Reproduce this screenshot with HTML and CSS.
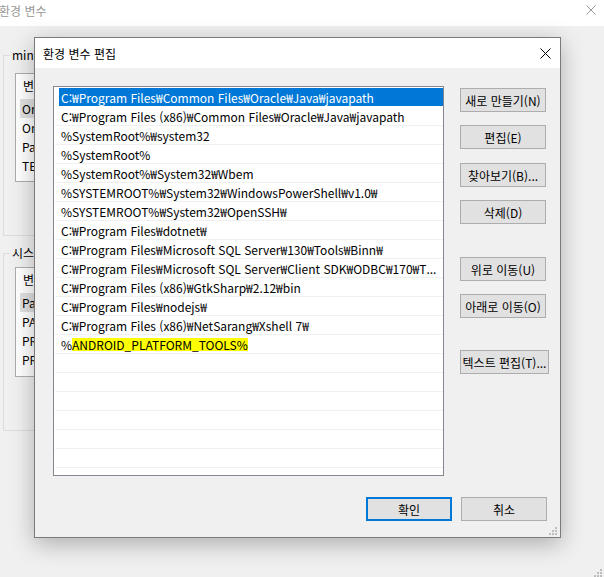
FILE: index.html
```html
<!DOCTYPE html>
<html lang="ko">
<head>
<meta charset="utf-8">
<title>환경 변수 편집</title>
<link rel="stylesheet" href="styles.css">
</head>
<body>
<div class="bgwin">
  <div class="bg-title">
    <span class="bg-title-text">환경 변수</span>
    <svg class="bg-close" width="10" height="10" viewBox="0 0 10 10"><path d="M0.5 0.5L9.5 9.5M9.5 0.5L0.5 9.5" stroke="#9a9a9a" stroke-width="1" fill="none"/></svg>
  </div>
  <div class="bg-body">
    <div class="group g1">
      <div class="legend">mint</div>
      <div class="lv lv1">
        <div class="lv-head">변</div>
        <div class="lv-row sel">Or</div>
        <div class="lv-row">Or</div>
        <div class="lv-row">Pa</div>
        <div class="lv-row">TE</div>
      </div>
    </div>
    <div class="group g2">
      <div class="legend">시스</div>
      <div class="lv lv2">
        <div class="lv-head">변</div>
        <div class="lv-row sel">Pa</div>
        <div class="lv-row">PA</div>
        <div class="lv-row">PR</div>
        <div class="lv-row">PR</div>
      </div>
    </div>
  </div>
  <svg class="grip bg-grip" width="10" height="10" viewBox="0 0 10 10"><rect x="8" y="2" width="2" height="2"/><rect x="5" y="5" width="2" height="2"/><rect x="8" y="5" width="2" height="2"/><rect x="2" y="8" width="2" height="2"/><rect x="5" y="8" width="2" height="2"/><rect x="8" y="8" width="2" height="2"/></svg>
</div>

<div class="dialog">
  <div class="dlg-title">
    <span>환경 변수 편집</span>
    <svg class="dlg-close" width="11" height="11" viewBox="0 0 11 11"><path d="M0.5 0.5L10.5 10.5M10.5 0.5L0.5 10.5" stroke="#000" stroke-width="1" fill="none"/></svg>
  </div>
  <div class="dlg-body">
    <div class="dlg-main">
      <div class="list">
        <div class="row sel">C:₩Program Files₩Common Files₩Oracle₩Java₩javapath</div>
        <div class="row">C:₩Program Files (x86)₩Common Files₩Oracle₩Java₩javapath</div>
        <div class="row">%SystemRoot%₩system32</div>
        <div class="row">%SystemRoot%</div>
        <div class="row">%SystemRoot%₩System32₩Wbem</div>
        <div class="row">%SYSTEMROOT%₩System32₩WindowsPowerShell₩v1.0₩</div>
        <div class="row">%SYSTEMROOT%₩System32₩OpenSSH₩</div>
        <div class="row">C:₩Program Files₩dotnet₩</div>
        <div class="row">C:₩Program Files₩Microsoft SQL Server₩130₩Tools₩Binn₩</div>
        <div class="row">C:₩Program Files₩Microsoft SQL Server₩Client SDK₩ODBC₩170₩T...</div>
        <div class="row">C:₩Program Files (x86)₩GtkSharp₩2.12₩bin</div>
        <div class="row">C:₩Program Files₩nodejs₩</div>
        <div class="row">C:₩Program Files (x86)₩NetSarang₩Xshell 7₩</div>
        <div class="row">%<span class="hl">ANDROID_PLATFORM_TOOLS%</span></div>
        <div class="row"></div>
        <div class="row"></div>
        <div class="row"></div>
        <div class="row"></div>
        <div class="row"></div>
        <div class="row"></div>
        <div class="row"></div>
      </div>
      <div class="side">
        <button class="btn">새로 만들기(N)</button>
        <button class="btn">편집(E)</button>
        <button class="btn gap14">찾아보기(B)...</button>
        <button class="btn">삭제(D)</button>
        <button class="btn gap33">위로 이동(U)</button>
        <button class="btn">아래로 이동(O)</button>
        <button class="btn gap32 wide">텍스트 편집(T)...</button>
      </div>
    </div>
    <div class="dlg-foot">
      <button class="btn ok">확인</button>
      <button class="btn">취소</button>
    </div>
  </div>
  <svg class="grip dlg-grip" width="10" height="10" viewBox="0 0 10 10"><rect x="8" y="2" width="2" height="2"/><rect x="5" y="5" width="2" height="2"/><rect x="8" y="5" width="2" height="2"/><rect x="2" y="8" width="2" height="2"/><rect x="5" y="8" width="2" height="2"/><rect x="8" y="8" width="2" height="2"/></svg>
</div>
</body>
</html>
```
FILE: styles.css
```css
* { box-sizing: border-box; margin: 0; padding: 0; }
html, body { width: 604px; height: 577px; overflow: hidden; }
body {
  background: #f0f0f0;
  font-family: "Noto Sans CJK KR", "Noto Sans", sans-serif;
  font-size: 12px;
  color: #000;
  position: relative;
}

/* background window */
.bgwin { height: 577px; position: relative; }
.bg-title {
  height: 26px;
  background: #fff;
  display: flex;
  justify-content: space-between;
  align-items: flex-start;
  padding: 2px 8px 0 0;
}
.bg-title-text { color: #999; line-height: 18px; margin-left: -1px; }
.bg-close { margin-top: 3px; }
.bg-body { padding: 29px 0 0 3px; width: 34px; overflow: hidden; }
.group {
  width: 560px;
  border: 1px solid #dcdcdc;
  border-right: none;
}
.g1 { height: 181px; }
.g2 { height: 178px; margin-top: 17px; }
.legend {
  width: fit-content;
  background: #f0f0f0;
  margin: -9px 0 0 6px;
  padding: 0 2px;
  line-height: 16px;
  height: 16px;
  color: #000;
  white-space: nowrap;
}
.lv {
  margin-left: 11px;
  width: 520px;
  background: #fff;
  border: 1px solid #adadad;
  overflow: hidden;
}
.lv1 { margin-top: 10px; height: 109px; }
.lv2 { margin-top: 6px; height: 110px; }
.lv-head { height: 25px; line-height: 24px; padding-left: 7px; }
.lv-row { height: 19px; line-height: 19px; margin-left: 4px; padding-left: 2px; }
.lv-row.sel { background: #e0e0e0; }

.grip { position: absolute; fill: #bcbcbc; }
.bg-grip { right: 2px; bottom: 0; }

/* dialog */
.dialog {
  position: absolute;
  left: 34px;
  top: 37px;
  width: 527px;
  height: 501px;
  border: 1px solid #7a7a7a;
  background: #f0f0f0;
  box-shadow: 0 6px 22px rgba(0, 0, 0, 0.28);
  display: flex;
  flex-direction: column;
}
.dlg-title {
  height: 30px;
  flex: none;
  background: #fff;
  display: flex;
  align-items: center;
  justify-content: space-between;
  padding: 0 9px 0 8px;
}
.dlg-body { flex: 1; padding: 18px 13px 0 18px; }
.dlg-main { display: flex; align-items: flex-start; }
.list {
  width: 391px;
  height: 390px;
  background: #fff;
  border: 1px solid #828790;
  padding: 1px 0 0 1px;
  overflow: hidden;
  flex: none;
}
.row {
  height: 19px;
  line-height: 19px;
  border-bottom: 1px solid #f0f0f0;
  padding-left: 6px;
  padding-right: 4px;
  white-space: nowrap;
  overflow: hidden;
}
.row.sel {
  color: #fff;
  background: linear-gradient(to right, #fff 4px, #0078d7 4px);
  border-bottom-color: #fff;
}
.hl { display: inline-block; line-height: 13px; background: #ffff00; }

.side {
  margin-left: 16px;
  padding-top: 2px;
  display: flex;
  flex-direction: column;
  align-items: flex-start;
  gap: 13px;
}
.btn {
  width: 86px;
  height: 24px;
  background: #e1e1e1;
  border: 1px solid #adadad;
  font-family: inherit;
  font-size: 12px;
  color: #000;
  white-space: nowrap;
  padding: 0;
}
.btn.wide { width: 89px; }
.gap14 { margin-top: 1px; }
.gap33 { margin-top: 20px; }
.gap32 { margin-top: 19px; }
.dlg-foot {
  display: flex;
  justify-content: flex-end;
  gap: 9px;
  margin-top: 21px;
}
.btn.ok { border: 2px solid #0078d7; }
.dlg-grip { right: 3px; bottom: 2px; }
```
